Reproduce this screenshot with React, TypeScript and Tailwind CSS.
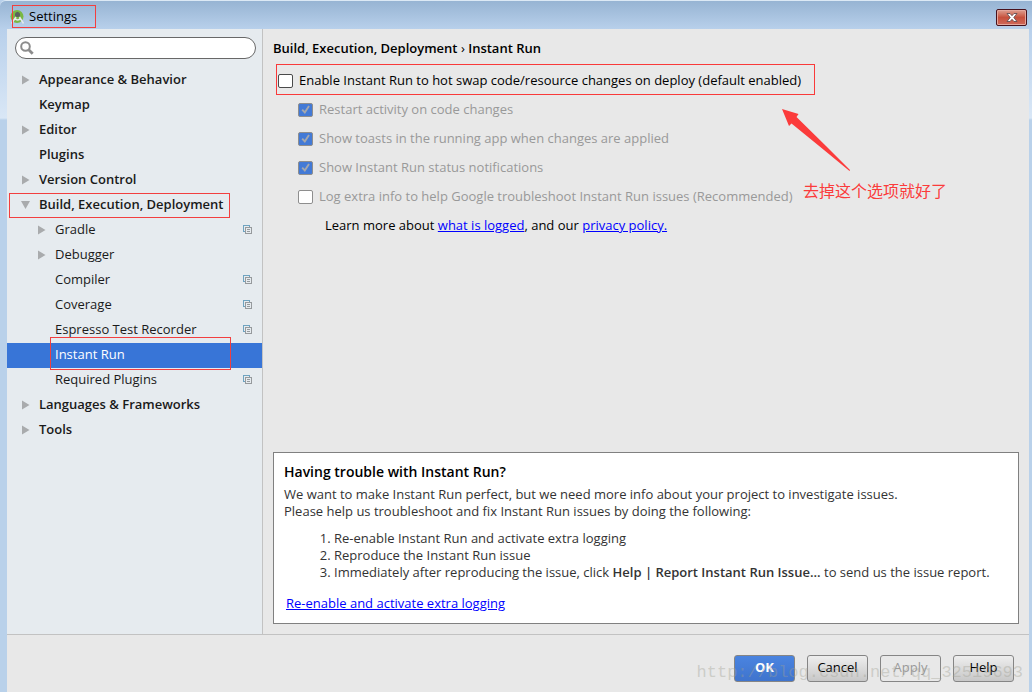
import React from "react";

type Node = {
  label: string;
  level: 0 | 1;
  arrow?: "right" | "down";
  project?: boolean;
  selected?: boolean;
  outline?: "group" | "item";
};

const nodes: Node[] = [
  { label: "Appearance & Behavior", level: 0, arrow: "right" },
  { label: "Keymap", level: 0 },
  { label: "Editor", level: 0, arrow: "right" },
  { label: "Plugins", level: 0 },
  { label: "Version Control", level: 0, arrow: "right" },
  { label: "Build, Execution, Deployment", level: 0, arrow: "down", outline: "group" },
  { label: "Gradle", level: 1, arrow: "right", project: true },
  { label: "Debugger", level: 1, arrow: "right" },
  { label: "Compiler", level: 1, project: true },
  { label: "Coverage", level: 1, project: true },
  { label: "Espresso Test Recorder", level: 1, project: true },
  { label: "Instant Run", level: 1, selected: true, outline: "item" },
  { label: "Required Plugins", level: 1, project: true },
  { label: "Languages & Frameworks", level: 0, arrow: "right" },
  { label: "Tools", level: 0, arrow: "right" },
];

const options = [
  { id: "restart", label: "Restart activity on code changes", checked: true },
  { id: "toasts", label: "Show toasts in the running app when changes are applied", checked: true },
  { id: "status", label: "Show Instant Run status notifications", checked: true },
  { id: "log", label: "Log extra info to help Google troubleshoot Instant Run issues (Recommended)", checked: false },
];

function Arrow({ direction }: { direction?: "right" | "down" }) {
  return (
    <svg className="w-4 h-4 shrink-0" viewBox="0 0 16 16" fill="#a9abad" aria-hidden="true">
      {direction === "right" && <path d="M4 3.500v9l7.500-4.500z" />}
      {direction === "down" && <path d="M3 4h9L7.500 12z" />}
    </svg>
  );
}

function ProjectIcon() {
  return (
    <svg className="w-[9px] h-[9px] shrink-0" viewBox="0 0 9 9" fill="none" shapeRendering="crispEdges" aria-hidden="true">
      <path d="M.5 7V.5H7M1 6.5h1M6.5 1v1" stroke="#6fa3c0" />
      <path d="M2.5 2.5h6v6h-6zM4 4.5h3M4 6.5h3" stroke="#969a9d" />
    </svg>
  );
}

function AppIcon() {
  return (
    <svg className="w-4 h-4 shrink-0" viewBox="0 0 16 16" aria-hidden="true">
      <circle cx="7" cy="7.500" r="6.500" fill="#79b843" />
      <path d="M4.500 7.500 7.500 2.500l3 5z" fill="#67726a" />
      <circle cx="7.500" cy="5.500" r="2.500" fill="#5b625d" />
      <path d="M1.500 14.500 6 8M13.500 14.500 9.500 8M5 9.500c1.500 2 4 2 5.500-.5" stroke="#e4e9ec" strokeWidth="1.500" fill="none" />
    </svg>
  );
}

function CheckBox({ id, label, checked, disabled }: { id: string; label: string; checked?: boolean; disabled?: boolean }) {
  return (
    <div className={"flex h-[29px] items-center gap-1.5 " + (disabled ? "text-[#999999]" : "text-black")}>
      <span className="relative flex shrink-0">
        <input
          id={id}
          type="checkbox"
          defaultChecked={checked}
          disabled={disabled}
          className={
            "peer h-3.5 w-[15px] appearance-none rounded-[2px] border bg-white checked:bg-[#437ad6] " +
            (disabled ? "border-[#8e8e8e]" : "border-[#4a4a4a]")
          }
        />
        <svg className="pointer-events-none absolute inset-0 hidden h-3.5 w-[15px] peer-checked:block" viewBox="0 0 15 14" fill="none" stroke="#a5a8ad" strokeWidth="1.9" aria-hidden="true">
          <path d="M4.200 6.700 6.800 9.500 11 3" />
        </svg>
      </span>
      <label htmlFor={id} className="whitespace-nowrap">{label}</label>
    </div>
  );
}

const buttonBase = "h-[27px] w-[61px] rounded-[3px] border border-[#858585] pb-0.5 text-[13px] ";

export default function App() {
  return (
    <div className="relative flex min-h-screen flex-col overflow-hidden bg-[linear-gradient(to_bottom,#b8d0eb_29px,#d9e7f6_118px,#b9d1ea_120px)] font-['Open_Sans','Noto_Sans_CJK_SC',sans-serif] text-[13px]">
      <header className="flex h-[29px] shrink-0 items-start justify-between rounded-tl-md border-t border-[#dce9f5] bg-linear-to-b from-[#97b4d3] to-[#b8d0eb] pl-2.5">
        <div className="relative mt-1 flex h-[23px] items-center gap-[3px] pr-[19px] text-[13px] text-black">
          <AppIcon />
          <h1 className="pt-px">Settings</h1>
          <span className="pointer-events-none absolute inset-y-0 right-0 left-0.5 border border-[#f23f3f]" />
        </div>
        <button aria-label="Close" className="mt-2 mr-[5px] flex h-[17px] w-[31px] items-center justify-center rounded-[2px] border border-[#48121c] bg-linear-to-b from-[#dd9f91] via-[#c6503c] to-[#d0695a] shadow-[inset_0_0_0_1px_#e5a79c]">
          <svg className="h-[9px] w-3" viewBox="0 0 12 9" aria-hidden="true">
            <path d="M1 .5h3L6 2.7 8 .5h3L7.8 4.5 11 8.5H8L6 6.3 4 8.5H1L4.2 4.5z" fill="#fff" stroke="#56454a" strokeWidth=".8" />
          </svg>
        </button>
      </header>

      <div className="mr-[3px] ml-[7px] flex flex-1 flex-col bg-[#e8e8e8]">
        <div className="flex flex-1">
          <aside className="w-64 shrink-0 border-r border-[#c2c2c2] bg-[#e6ebef]">
            <div className="relative mx-2 mt-2 mr-1.5">
              <svg className="absolute top-1 left-[5px] h-4 w-4" viewBox="0 0 16 16" fill="none" stroke="#8c8c8c" aria-hidden="true">
                <circle cx="5.5" cy="5.5" r="4.3" strokeWidth="2" />
                <path d="m8.7 8.7 4 4" strokeWidth="2.8" />
              </svg>
              <input aria-label="Search settings" type="search" className="block h-[22px] w-full appearance-none rounded-full border border-[#686868] bg-white pr-3 pl-6 outline-none" />
            </div>
            <ul className="mt-[9px]">
              {nodes.map((n) => (
                <li
                  key={n.label}
                  className={
                    "relative flex h-[25px] items-center pr-2.5 pb-0.5 " +
                    (n.level === 0 ? "gap-[5px] pl-[11px] font-semibold " : "gap-[5px] pl-[27px] ") +
                    (n.selected ? "bg-[#3875d7] text-white" : "text-[#1a1a1a]")
                  }
                >
                  <Arrow direction={n.arrow} />
                  <span className="flex-1 whitespace-nowrap">{n.label}</span>
                  {n.project && <ProjectIcon />}
                  {n.outline === "group" && (
                    <span className="pointer-events-none absolute inset-y-0 right-8 left-0.5 border border-[#f23f3f]" />
                  )}
                  {n.outline === "item" && (
                    <span className="pointer-events-none absolute -top-1.5 right-[31px] -bottom-0.5 left-[43px] border border-[#f23f3f]" />
                  )}
                </li>
              ))}
            </ul>
          </aside>

          <main className="flex min-w-0 flex-1 flex-col px-2.5 pt-2.5 pb-2.5">
            <h2 className="h-[27px] font-semibold text-black">
              Build, Execution, Deployment <span className="font-normal">›</span> Instant Run
            </h2>
            <div className="relative w-[539px] pl-[5px]">
              <CheckBox id="enable" label="Enable Instant Run to hot swap code/resource changes on deploy (default enabled)" />
              <span className="pointer-events-none absolute -top-0.5 right-[-3px] bottom-0 left-[3px] border border-[#f93a3a]" />
              <svg className="absolute top-[43px] left-[508px] h-[64px] w-[70px]" viewBox="0 0 70 64" fill="#fb3b3b" aria-hidden="true">
                <path d="M1 0 17.500 5 15.500 8 45 37 69 61 68.500 62 43 41 10.500 14.500 8 17z" />
              </svg>
              <p className="absolute top-[114px] left-[530px] text-[16px] leading-5 whitespace-nowrap text-[#fb3b3b] font-['Noto_Sans_CJK_SC',sans-serif]">去掉这个选项就好了</p>
            </div>
            <div className="pl-[25px]">
              {options.map((o) => (
                <CheckBox key={o.id} {...o} disabled />
              ))}
            </div>
            <p className="pl-[52px] leading-[29px] text-black">
              Learn more about <a href="#logged" className="text-[#0000ff] underline">what is logged</a>, and our{" "}
              <a href="#privacy" className="text-[#0000ff] underline">privacy policy.</a>
            </p>

            <section className="mt-auto border border-[#808080] bg-white px-2.5 pt-2.5 pb-[11px] leading-[17px] text-[#333333]">
              <h3 className="mb-[5px] text-[14px] leading-[18px] font-semibold text-black">Having trouble with Instant Run?</h3>
              <p>We want to make Instant Run perfect, but we need more info about your project to investigate issues.</p>
              <p>Please help us troubleshoot and fix Instant Run issues by doing the following:</p>
              <ol className="mt-2.5 list-decimal pl-[50px]">
                <li>Re-enable Instant Run and activate extra logging</li>
                <li>Reproduce the Instant Run issue</li>
                <li>Immediately after reproducing the issue, click <b className="font-semibold">Help | Report Instant Run Issue...</b> to send us the issue report.</li>
              </ol>
              <p className="mt-3.5 pl-0.5">
                <a href="#enable" className="text-[#0000ff] underline">Re-enable and activate extra logging</a>
              </p>
            </section>
          </main>
        </div>

        <footer className="relative flex h-[58px] shrink-0 items-start justify-end gap-3 border-t border-[#c2c2c2] pt-5 pr-[15px]">
          <button className={buttonBase + "bg-linear-to-b from-[#4a84e0] to-[#3f74cd] font-bold text-white"}>OK</button>
          <button className={buttonBase + "bg-linear-to-b from-[#eeeeee] to-[#c8c8c8] text-black"}>Cancel</button>
          <button disabled className={buttonBase + "bg-[#e8e8e8] text-[#999999]"}>Apply</button>
          <button className={buttonBase + "bg-linear-to-b from-[#eeeeee] to-[#c8c8c8] text-black"}>Help</button>
          <span className="pointer-events-none absolute top-[26px] right-1.5 font-['Liberation_Mono',monospace] text-[17px] leading-6 text-[#a0a094]/40">http://blog.csdn.net/qq_32519693</span>
        </footer>
      </div>
    </div>
  );
}
